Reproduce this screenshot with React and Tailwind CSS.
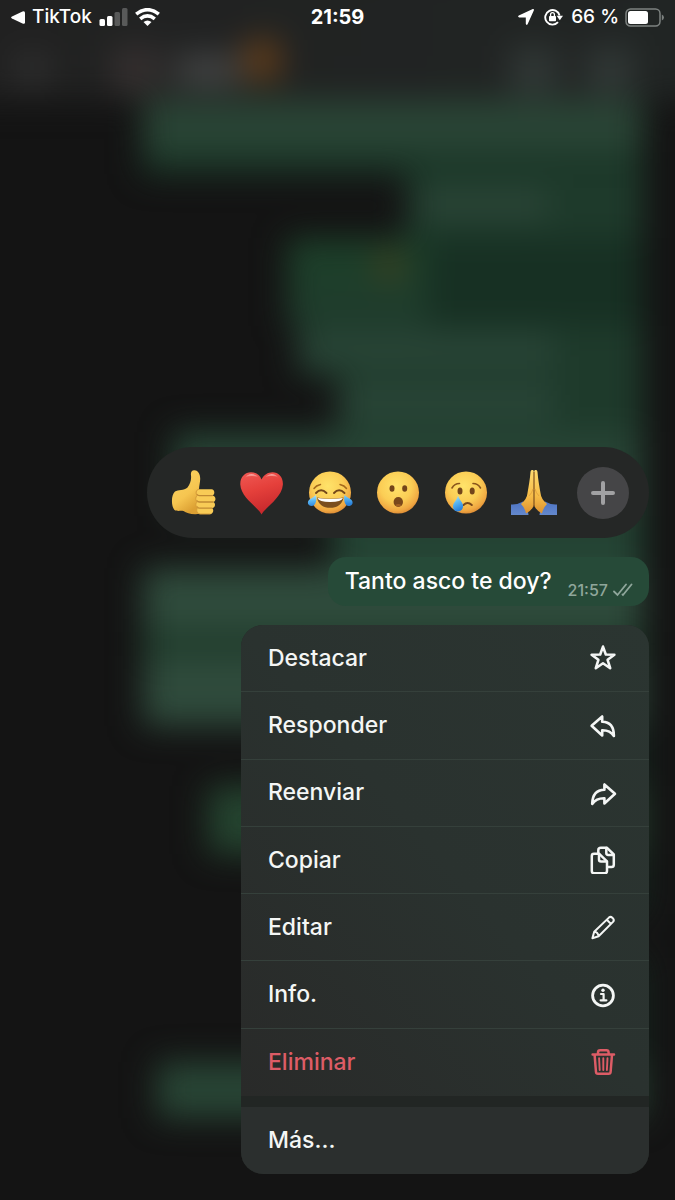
import { useState } from "react";

const Icon = ({ children, size = 28, width = 2.6 }) => (
  <svg
    width={size}
    height={size}
    viewBox="0 0 28 28"
    fill="none"
    stroke="currentColor"
    strokeWidth={width}
    strokeLinecap="round"
    strokeLinejoin="round"
    aria-hidden="true"
  >
    {children}
  </svg>
);

const StarIcon = () => (
  <Icon>
    <path d="M14 2.6 16.8 10.5 25.4 10.7 18.6 15.8 21.2 24.2 14 19.3 6.8 24.2 9.4 15.8 2.6 10.7 11.2 10.5Z" />
  </Icon>
);

const ReplyIcon = () => (
  <Icon>
    <path d="M2.6 14.8 13.2 5.5V10.8C20.5 11 25 15.3 24.9 25C22.2 20.7 18.5 19.1 13.2 19.2V24.5Z" />
  </Icon>
);

const ForwardIcon = () => (
  <Icon>
    <path d="M26 14.8 15.4 5.5V10.8C8 11 3.4 15.3 3.200 24.900C6.200 20.500 10 19.100 15.400 19.200V24.500Z" />
  </Icon>
);

const CopyIcon = () => (
  <Icon width={2.5}>
    <path d="M5 7.700H10L18 15.300V25Q18 27.300 15.800 27.300H5Q2.800 27.300 2.800 25V9.900Q2.800 7.700 5 7.700Z" />
    <path d="M10 8.100V13.500Q10 15.500 12 15.500H17.600" />
    <path d="M9.300 7V4.200Q9.300 1.700 11.900 1.700H17.800L24.800 8.500V18.800Q24.800 21.100 22.500 21.100H18.600" />
    <path d="M17.300 2V7.100Q17.300 9 19.200 9H24.400" />
  </Icon>
);

const PencilIcon = () => (
  <Icon width={2}>
    <path d="M3.400 25.200 5.200 18.800 19.900 4.600Q21.600 3.100 23.300 4.700L24 5.400Q25.600 7.200 24 8.900L9.600 23.300ZM17.800 6.700 21.900 10.900M5.200 18.800Q9 19.200 9.600 23.300" />
  </Icon>
);

const InfoIcon = () => (
  <Icon width={2.8}>
    <circle cx="14" cy="14.500" r="10.400" />
    <path d="M12 13H14.600V19.200M11.600 19.300H17.400" strokeWidth="2.200" />
    <circle cx="14" cy="9.300" r="1.700" fill="currentColor" stroke="none" />
  </Icon>
);

const TrashIcon = () => (
  <Icon width={2.5}>
    <path d="M3.600 6.600H25M9 6.300V4.400Q9 2.200 11.200 2.200H17.400Q19.600 2.200 19.600 4.400V6.300M5.600 7 7 24Q7.100 25.800 9 25.800H19.600Q21.500 25.800 21.600 24L23 7" />
    <path d="M10.100 10.300 10.700 22M14.300 10.300V22M18.500 10.300 17.900 22" strokeWidth="1.900" />
  </Icon>
);

const ThumbsUp = () => (
  <svg width="48" height="48" viewBox="0 0 48 48" aria-hidden="true">
    <defs>
      <linearGradient id="thumb" x1="0" y1="0" x2="0.5" y2="1">
        <stop offset="0" stopColor="#fbd665" />
        <stop offset="0.65" stopColor="#f6c550" />
        <stop offset="1" stopColor="#dca033" />
      </linearGradient>
    </defs>
    <path
      d="M4 22.500C7 20.500 13 22 16.500 18.500C19 15.500 20.500 11 20 6.500C19.500 2.500 21 1 23.500 1.200C27.500 1.500 29.300 5.500 29.200 10C29.100 14 28 17 28 20.500L30 44.500C22 46.500 16 44 12.500 42C9 41.500 6 42.500 3.500 41C0 37 0 26 4 22.500Z"
      fill="url(#thumb)"
    />
    <path
      d="M28 20.200H40.500C43.800 20.200 44.300 25.500 41.500 26.600C45.300 27 45.400 32.400 42 33C44.900 33.600 44.700 38.800 41 39.200C43.200 40 42.400 45 39.500 45H29C25.500 44.500 25 40.500 26.600 38.800C24.300 37 24.300 34 26.300 32.600C24.300 31 24.300 28 26.300 26.500C24.500 24.500 25 20.800 28 20.200Z"
      fill="#f8cb56"
    />
    <path
      d="M41.500 26.600H28.500Q26.500 26.600 26 25.500M42 33H28.500Q26.500 33 26 31.800M41 39.200H29Q27 39.200 26.400 38"
      fill="none"
      stroke="#c08a33"
      strokeWidth="1.300"
      strokeLinecap="round"
    />
    <path d="M28 20.200C24.600 20.800 24.500 25 26.200 26.500C24.200 28.500 24.300 31 26.200 32.800C24.300 34.500 24.500 37 26.500 38.800C25 41 25.600 44.200 29 45H39.500" fill="none" stroke="#d59b38" strokeWidth="1" />
  </svg>
);

const Heart = () => (
  <svg width="48" height="48" viewBox="0 0 48 48" aria-hidden="true">
    <defs>
      <linearGradient id="heart" x1="0.3" y1="0" x2="0.6" y2="1">
        <stop offset="0" stopColor="#ee5550" />
        <stop offset="0.4" stopColor="#e5403b" />
        <stop offset="1" stopColor="#c4262b" />
      </linearGradient>
      <linearGradient id="shine" x1="0" y1="0" x2="0" y2="1">
        <stop offset="0" stopColor="#ffd9d5" stopOpacity="0.9" />
        <stop offset="1" stopColor="#f2645d" stopOpacity="0" />
      </linearGradient>
    </defs>
    <path d="M22.500 45.500C19 38 2 29 1.300 15.500C1 8 6 3.200 12 3.200C17 3.200 21 6 22.500 10.500C24.500 6 29 3.200 33.500 3.200C39.500 3.200 44.200 8 43.900 15.500C43 29 26.500 38 22.500 45.500Z" fill="url(#heart)" />
    <path d="M5.500 9.500C8 4.500 15 3.500 19.500 8.500C14 6.500 10 6.500 5.500 9.500ZM26 8.500C30.500 3.500 37 4.500 40 9.500C36 6.500 32 6.500 26 8.500Z" fill="url(#shine)" />
  </svg>
);

// yellow ball shared by the three round faces
const Face = ({ children }) => (
  <svg width="48" height="48" viewBox="0 0 48 48" aria-hidden="true">
    <defs>
      <radialGradient id="face" cx="0.45" cy="0.35" r="0.68">
        <stop offset="0" stopColor="#ffe36a" />
        <stop offset="0.55" stopColor="#fbcd55" />
        <stop offset="0.85" stopColor="#f0a842" />
        <stop offset="1" stopColor="#d98632" />
      </radialGradient>
      <linearGradient id="tear" x1="0" y1="0" x2="0.3" y2="1">
        <stop offset="0" stopColor="#b9e9fb" />
        <stop offset="0.5" stopColor="#5bb8f4" />
        <stop offset="1" stopColor="#2b83dc" />
      </linearGradient>
    </defs>
    <circle cx="24" cy="23.500" r="21" fill="url(#face)" />
    {children}
  </svg>
);

const Joy = () => (
  <Face>
    <path d="M10 24Q15 18.500 20.500 24M28 24Q33 18.500 38.500 24" fill="none" stroke="#75481a" strokeWidth="1.900" strokeLinecap="round" />
    <path d="M8 19.500Q10 16.500 14.500 15.500M40.500 19.500Q38.500 16.500 34 15.500" fill="none" stroke="#a66a1d" strokeWidth="1.500" strokeLinecap="round" />
    <path d="M11 28.500Q24 31 37.500 28.500C36.500 35.500 31 38.800 24.200 38.800S12 35.500 11 28.500Z" fill="#7b4f1f" />
    <path d="M11.500 28.900Q24 31.200 37 28.900Q35.500 33 24.200 33T11.500 28.900Z" fill="#fff" />
    <path d="M10 26C11 30.500 10 37 5.500 37C2 37 .5 33 3.500 30.500Q7.500 28.500 10 26ZM38.500 26C37.500 30.500 38.500 37 43 37C46.500 37 48 33 45 30.500Q41 28.500 38.500 26Z" fill="url(#tear)" />
  </Face>
);

const Surprised = () => (
  <Face>
    <ellipse cx="18" cy="19.500" rx="2.500" ry="3.200" fill="#73451a" />
    <ellipse cx="30.700" cy="19.500" rx="2.500" ry="3.200" fill="#73451a" />
    <ellipse cx="24.300" cy="33" rx="4.700" ry="4.900" fill="#7a481b" />
    <path d="M21 36.300Q24.300 33.500 27.600 36.300Q24.300 39 21 36.300Z" fill="#a05f24" />
  </Face>
);

const Crying = () => (
  <Face>
    <ellipse cx="18" cy="22" rx="2.500" ry="3.600" fill="#73451a" />
    <ellipse cx="30.200" cy="22" rx="2.500" ry="3.600" fill="#73451a" />
    <path d="M10 19Q12.500 14.500 17.500 14.500M31 14.500Q36 14.500 38.500 19" fill="none" stroke="#8a561d" strokeWidth="1.600" strokeLinecap="round" />
    <path d="M21.500 36Q25.500 32 29.800 36" fill="none" stroke="#7a481b" strokeWidth="2" strokeLinecap="round" />
    <path d="M16 26.500C17.500 31.500 21.500 33.500 21 38C20.500 41.500 17.500 42.500 16 42.500C13.500 42.500 11 41 11 37.500C11 33.500 15 31.500 16 26.500Z" fill="url(#tear)" />
  </Face>
);

const Pray = () => (
  <svg width="48" height="48" viewBox="0 0 48 48" aria-hidden="true">
    <defs>
      <linearGradient id="hand" x1="0" y1="0" x2="0" y2="1">
        <stop offset="0" stopColor="#ffdc70" />
        <stop offset="0.6" stopColor="#f6bc47" />
        <stop offset="1" stopColor="#dc9130" />
      </linearGradient>
      <linearGradient id="sleeve" x1="0" y1="0" x2="0" y2="1">
        <stop offset="0" stopColor="#4d74c4" />
        <stop offset="1" stopColor="#6488cc" />
      </linearGradient>
    </defs>
    <g transform="translate(1 0)">
      <path d="M1 35.500Q7 36 13 32.500Q18 38 18.500 46H1ZM47 35.500Q41 36 35 32.500Q30 38 29.500 46H47Z" fill="url(#sleeve)" />
      <path d="M23.800 2.500C23.500 .5 20.800 .5 20.500 3C20 10 18.500 18 17.500 24Q17 30 11 35Q15 39 16 44.500Q22.500 41 23.800 36ZM24.200 2.500C24.500 .5 27.200 .5 27.500 3C28 10 29.500 18 30.500 24Q31 30 37 35Q33 39 32 44.500Q25.500 41 24.200 36Z" fill="url(#hand)" />
      <path d="M24 3V38" stroke="#96601f" strokeWidth="1.100" />
      <path d="M19 27Q22 24 23 20M29 27Q26 24 25 20" fill="none" stroke="#e0a03c" strokeWidth="0.900" />
    </g>
  </svg>
);

const reactions = [
  { label: "Me gusta", Emoji: ThumbsUp },
  { label: "Corazón", Emoji: Heart },
  { label: "Risa", Emoji: Joy },
  { label: "Sorpresa", Emoji: Surprised },
  { label: "Tristeza", Emoji: Crying },
  { label: "Gracias", Emoji: Pray },
];

const actions = [
  { label: "Destacar", Glyph: StarIcon },
  { label: "Responder", Glyph: ReplyIcon },
  { label: "Reenviar", Glyph: ForwardIcon },
  { label: "Copiar", Glyph: CopyIcon },
  { label: "Editar", Glyph: PencilIcon },
  { label: "Info.", Glyph: InfoIcon },
  { label: "Eliminar", Glyph: TrashIcon, danger: true },
];

const StatusBar = () => (
  <header className="grid h-[34px] grid-cols-3 items-center px-[11px] text-[19px] font-medium text-white">
    <div className="flex items-center gap-[7px]">
      <a href="#tiktok" className="flex items-center gap-[7px]">
        <svg width="14" height="13" viewBox="0 0 14 13" fill="currentColor" aria-hidden="true">
          <path d="M1 5.400 11.500.4Q14-.5 14 1.800V11.200Q14 13.500 11.500 12.600L1 7.600Q-.8 6.500 1 5.400Z" />
        </svg>
        TikTok
      </a>
      <svg width="29" height="18" viewBox="0 0 29 18" fill="currentColor" aria-hidden="true">
        <rect x="0.500" y="11" width="5.500" height="7" rx="1.500" />
        <rect x="8" y="8" width="5.500" height="10" rx="1.500" />
        <rect x="15.500" y="4" width="5.500" height="14" rx="1.500" opacity="0.250" />
        <rect x="23" y="0" width="5.500" height="18" rx="1.500" opacity="0.250" />
      </svg>
      <svg width="25" height="18" viewBox="0 0 25 18" fill="none" stroke="currentColor" strokeWidth="3.600" aria-hidden="true">
        <path d="M1.200 6.200Q12.500-2.800 23.800 6.200M5.200 10.800Q12.500 5 19.800 10.800" />
        <path d="M12.500 18 8.500 14Q12.500 10.800 16.500 14Z" fill="currentColor" stroke="none" />
      </svg>
    </div>
    <time className="text-center text-[20px] font-bold">21:59</time>
    <div className="flex items-center justify-end gap-[6px]">
      <svg width="16" height="16" viewBox="0 0 16 16" fill="currentColor" aria-hidden="true">
        <path d="M15.900 1.200 9.600 15.200Q8.400 16.800 7.800 14.800V8.400H1.300Q-.8 7.800.8 6.500L14.800.1Q16.400-.1 15.900 1.200Z" />
      </svg>
      <svg className="ml-1" width="19" height="18" viewBox="0 0 19 18" fill="none" stroke="currentColor" strokeWidth="1.900" aria-hidden="true">
        <path d="M14 14.200A7.300 7.300 0 1 1 15.600 7.500" />
        <path d="M12.600 7.800H19L15.800 12.300Z" fill="currentColor" stroke="none" />
        <rect x="5" y="8" width="7" height="5.300" rx="0.800" fill="currentColor" stroke="none" />
        <path d="M6.600 8V6.500A1.900 1.900 0 0 1 10.400 6.500V8" strokeWidth="1.300" />
      </svg>
      <span className="ml-[2px]">66 %</span>
      <svg width="39" height="19" viewBox="0 0 39 19" aria-hidden="true">
        <rect x="1" y="1" width="34" height="17" rx="4.500" fill="none" stroke="#7d8280" strokeWidth="1.500" />
        <rect x="3" y="3" width="20" height="13" rx="2.500" fill="#fff" />
        <path d="M36.800 6.500Q39 7.300 39 9.500T36.800 12.500Z" fill="#7d8280" />
      </svg>
    </div>
  </header>
);

// the conversation under the menu, out of focus
const BlurredChat = () => (
  <div aria-hidden="true" className="absolute inset-0 overflow-hidden bg-[#141414]">
    <div className="-mx-8 -mt-8 flex flex-col items-end pl-8 pr-16 blur-[16px]">
      <div className="-ml-8 -mr-16 flex h-[132px] items-center self-stretch bg-linear-to-r from-[#212121] to-[#212524] pl-12 pt-[72px]">
        <div className="h-8 w-8 bg-[#303030]" />
        <div className="ml-16 h-12 w-12 bg-[#342f2f]" />
        <div className="ml-4 h-8 w-16 bg-[#424343]" />
        <div className="mb-5 ml-1 h-10 w-9 bg-[#603c1a]" />
        <div className="ml-[230px] h-12 w-12 bg-[#303735]" />
        <div className="ml-7 h-12 w-12 bg-[#303735]" />
      </div>
      <div className="h-[52px] w-[500px] bg-[#294435]" />
      <div className="h-[22px] w-[500px] bg-[#1b3728]" />
      <div className="h-[64px] w-[236px] bg-[#1e3a2b] pl-3 pt-4">
        <div className="h-[28px] w-[128px] bg-[#2b4537]" />
      </div>
      <div className="flex h-[88px] w-[356px] bg-[#173023]">
        <div className="h-[88px] w-[140px] bg-linear-to-b from-[#1c4029] to-[#203c2d]">
          <div className="ml-[90px] mt-4 h-6 w-6 bg-[#43401c]" />
        </div>
      </div>
      <div className="h-[50px] w-[345px] bg-[#1e3a2b] pr-[90px] pt-2">
        <div className="h-8 bg-[#294537]" />
      </div>
      <div className="h-[56px] w-[305px] bg-[#1e3a2b] pr-[90px] pt-2">
        <div className="h-9 bg-[#294537]" />
      </div>
      <div className="h-[84px] w-[470px] bg-[#274435]" />
      <div className="h-[52px] w-[310px] bg-[#234333]" />
      <div className="h-[62px] w-[500px] bg-[#2f4b3c]" />
      <div className="h-[28px] w-[500px] bg-[#203c2c]" />
      <div className="h-[68px] w-[500px] bg-[#2f4b3c]" />
      <div className="h-[60px] w-[300px] bg-[#14291f]" />
      <div className="h-[68px] w-[435px] bg-[#24432f]" />
      <div className="h-[60px] w-[300px] bg-[#14291f]" />
      <div className="mt-[44px] h-[104px] w-[300px] bg-[#14291f]" />
      <div className="h-[56px] w-[486px] bg-[#284535]" />
    </div>
  </div>
);

const ReactionBar = ({ picked, onPick }) => (
  <div className="flex h-[91px] w-[502px] max-w-full items-center justify-between rounded-full bg-[#252726] pl-6 pr-5">
    {reactions.map(({ label, Emoji }) => (
      <button
        key={label}
        type="button"
        aria-label={label}
        aria-pressed={picked === label}
        onClick={() => onPick(label)}
      >
        <Emoji />
      </button>
    ))}
    <button
      type="button"
      aria-label="Más reacciones"
      className="flex h-[52px] w-[52px] items-center justify-center rounded-full bg-[#454547] text-[#a1a1a3]"
    >
      <svg width="24" height="24" viewBox="0 0 24 24" stroke="currentColor" strokeWidth="4" strokeLinecap="round" aria-hidden="true">
        <path d="M12 2V22M2 12H22" />
      </svg>
    </button>
  </div>
);

const Message = () => (
  <div className="mt-[19px] flex h-[49px] items-center rounded-[18px] bg-[#264a38] pl-[17px] pr-4 text-white">
    <p className="text-[23px] font-medium">Tanto asco te doy?</p>
    <div className="ml-4 mt-4 flex items-center gap-[5px] text-[16px] font-medium text-[#8fa69b]">
      <time>21:57</time>
      <svg width="20" height="14" viewBox="0 0 20 14" fill="none" stroke="currentColor" strokeWidth="1.800" strokeLinecap="round" aria-hidden="true">
        <path d="M1 8.500 4.500 12 13 1.500M9.500 11.500 10 12 18.500 1.500" />
      </svg>
    </div>
  </div>
);

const ActionMenu = () => (
  <nav className="mt-[19px] w-[408px] max-w-full overflow-hidden rounded-[22px] bg-[#222624] text-[23px] font-medium text-[#f4f6f5]">
    <ul className="grid h-[471px] auto-rows-fr divide-y divide-[#35403b] bg-linear-to-bl from-[#2b3531] via-[#2a322f] to-[#292a29]">
      {actions.map(({ label, Glyph, danger }) => (
        <li key={label} className={danger ? "text-[#dd5c66]" : ""}>
          <button type="button" className="flex h-full w-full items-center justify-between pl-[27px] pr-8">
            {label}
            <Glyph />
          </button>
        </li>
      ))}
    </ul>
    <button type="button" className="mt-[11px] block h-[67px] w-full bg-[#2b2f2e] pl-[27px] text-left">
      Más...
    </button>
  </nav>
);

export default function App() {
  const [picked, setPicked] = useState(null);

  return (
    <div className="relative min-h-screen overflow-hidden font-['Inter',sans-serif]">
      <BlurredChat />
      <div className="relative">
        <StatusBar />
        <main className="flex flex-col items-end px-[26px] pb-[27px] pt-[413px]">
          <ReactionBar picked={picked} onPick={setPicked} />
          <Message />
          <ActionMenu />
        </main>
      </div>
    </div>
  );
}
